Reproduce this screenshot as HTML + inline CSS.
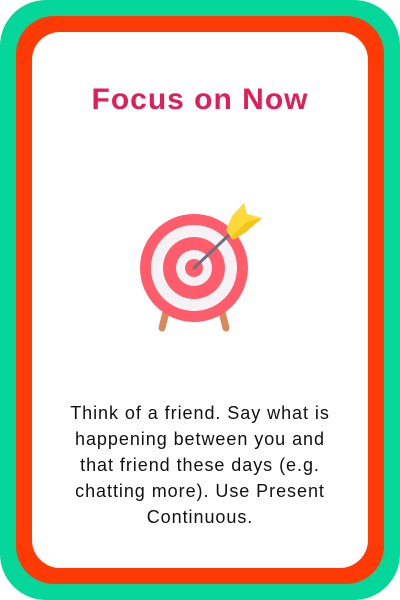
<!DOCTYPE html>
<html><head><meta charset="utf-8"><style>
html,body{margin:0;padding:0;width:400px;height:600px;background:#fff;overflow:hidden}
.g{position:absolute;left:0;top:0;width:400px;height:600px;background:#05d699;border-radius:46px}
.r{position:absolute;left:16px;top:16px;width:368px;height:568px;background:#ff3a05;border-radius:38px}
.w{position:absolute;left:32px;top:32px;width:336px;height:536px;background:#fff;border-radius:28px}
h1{position:absolute;left:0;top:83px;width:400px;margin:0;text-align:center;font:bold 30px "Liberation Sans",sans-serif;letter-spacing:1px;color:#de1f5a}
p{position:absolute;left:20px;top:400px;width:360px;margin:0;text-align:center;font:18px/26px "Liberation Sans",sans-serif;letter-spacing:0.95px;color:#111;white-space:nowrap}
svg{position:absolute;left:0;top:0}
</style></head><body>
<div class="g"></div><div class="r"></div><div class="w"></div>
<h1>Focus on Now</h1>
<svg width="400" height="600">
<line x1="166" y1="312" x2="162" y2="328" stroke="#d98a5c" stroke-width="7" stroke-linecap="round"/>
<line x1="222" y1="312" x2="226" y2="328" stroke="#d98a5c" stroke-width="7" stroke-linecap="round"/>
<circle cx="194" cy="268" r="54" fill="#ff5d6c"/>
<circle cx="194" cy="268" r="43" fill="#f4f2f4"/>
<circle cx="194" cy="268" r="31" fill="#ff5d6c"/>
<circle cx="194" cy="268" r="18" fill="#f4f2f4"/>
<circle cx="194" cy="268" r="9" fill="#ff5d6c"/>
<line x1="194" y1="268" x2="230" y2="234" stroke="#6e6e82" stroke-width="3" stroke-linecap="round"/>
<polygon points="226,230 232,216 244,203 247,214 262,218 246,232 233,240" fill="#ffd93a"/>
<polygon points="232,236 247,222 262,218 246,232 233,240" fill="#f5c518"/>
</svg>
<p>Think of a friend. Say what is<br>happening between you and<br>that friend these days (e.g.<br>chatting more). Use Present<br>Continuous.</p>
</body></html>
